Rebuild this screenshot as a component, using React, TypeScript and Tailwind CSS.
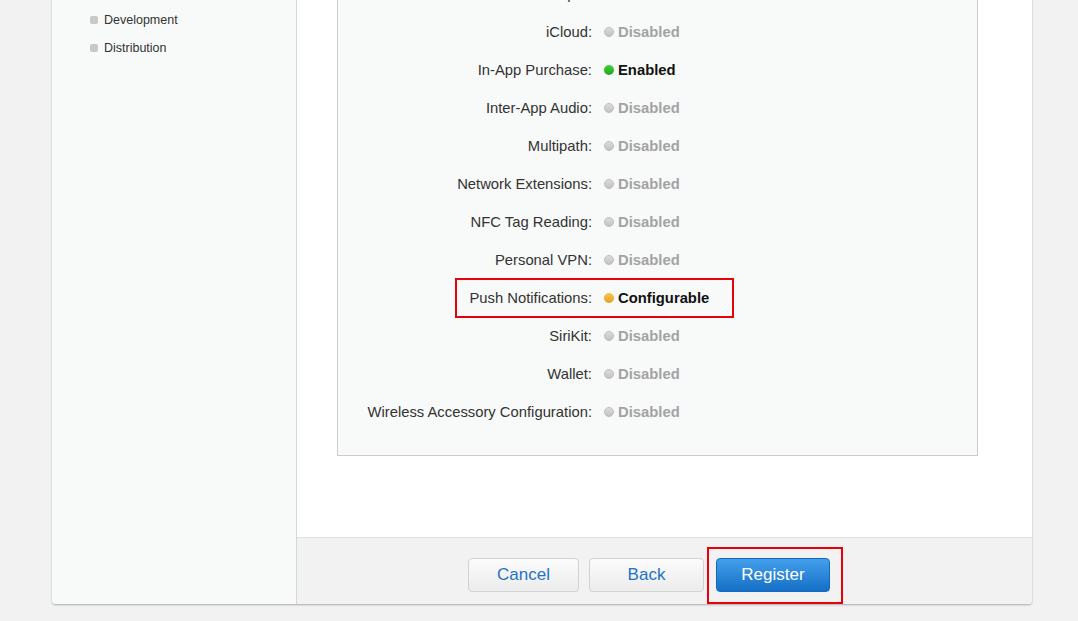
import React from "react";

type Status = "disabled" | "enabled" | "configurable";

type Capability = {
  label: string;
  status: Status;
  highlight?: boolean;
};

const CAPABILITIES: Capability[] = [
  { label: "Hotspot:", status: "disabled" },
  { label: "iCloud:", status: "disabled" },
  { label: "In-App Purchase:", status: "enabled" },
  { label: "Inter-App Audio:", status: "disabled" },
  { label: "Multipath:", status: "disabled" },
  { label: "Network Extensions:", status: "disabled" },
  { label: "NFC Tag Reading:", status: "disabled" },
  { label: "Personal VPN:", status: "disabled" },
  { label: "Push Notifications:", status: "configurable", highlight: true },
  { label: "SiriKit:", status: "disabled" },
  { label: "Wallet:", status: "disabled" },
  { label: "Wireless Accessory Configuration:", status: "disabled" },
];

const SIDEBAR_ITEMS = ["Development", "Distribution"];

function StatusDot({ status }: { status: Status }) {
  if (status === "enabled") {
    return <span className="inline-block h-[10px] w-[10px] rounded-full bg-gradient-to-b from-[#3fd43a] to-[#1fa51a]" />;
  }
  if (status === "configurable") {
    return <span className="inline-block h-[10px] w-[10px] rounded-full bg-gradient-to-b from-[#f7c64a] to-[#e2a021]" />;
  }
  return <span className="inline-block h-[10px] w-[10px] rounded-full border border-[#bdbdbd] bg-gradient-to-b from-[#dcdcdc] to-[#c2c2c2]" />;
}

function StatusText({ status }: { status: Status }) {
  if (status === "enabled") return <span className="font-bold text-[#111]">Enabled</span>;
  if (status === "configurable") return <span className="font-bold text-[#111]">Configurable</span>;
  return <span className="font-bold text-[#a3a3a3]">Disabled</span>;
}

function CapabilityRow({ cap }: { cap: Capability }) {
  return (
    <div className="relative flex h-[38px] items-center">
      {/* 红框高亮 */}
      {cap.highlight && (
        <div className="pointer-events-none absolute left-[117px] -top-[1px] h-[40px] w-[279px] border-2 border-[#e8000b]" />
      )}
      <div className="w-[266px] pr-[12px] text-right text-[#333]">{cap.label}</div>
      <div className="flex items-center gap-[4px]">
        <StatusDot status={cap.status} />
        <StatusText status={cap.status} />
      </div>
    </div>
  );
}

export default function App() {
  return (
    <div
      className="h-[621px] overflow-hidden bg-[#f2f2f2]"
      style={{ fontFamily: '"Liberation Sans", Arial, sans-serif' }}
    >
      <div className="mx-[52px] -mt-[40px] flex h-[644px] w-[980px] overflow-hidden rounded-b-[4px] bg-white shadow-[0_1px_2px_rgba(0,0,0,0.3)]">
        {/* 左侧栏 */}
        <aside className="w-[245px] shrink-0 border-r border-[#d6d6d6] bg-[#f8f9f9] pl-[38px] pt-[46px]">
          {SIDEBAR_ITEMS.map(item => (
            <div key={item} className="flex h-[28px] items-center gap-[6px] text-[12.5px] text-[#333]">
              <span className="inline-block h-[8px] w-[8px] rounded-[2px] bg-[#c8c8c8]" />
              {item}
            </div>
          ))}
        </aside>

        {/* 主区域 */}
        <main className="flex flex-1 flex-col">
          <div className="flex-1 pl-[40px] pr-[54px]">
            <div className="border-x border-b border-[#cccccc] bg-[#f8f9f9] pb-[24px] pt-[15px] text-[14.8px]">
              {CAPABILITIES.map(cap => (
                <CapabilityRow key={cap.label} cap={cap} />
              ))}
            </div>
          </div>

          {/* 底部按钮栏 */}
          <div className="flex h-[67px] items-center justify-center gap-[10px] border-t border-[#e0e0e0] bg-[#f2f2f2] pr-[31px] pt-[7px]">
            <button className="h-[34px] w-[111px] rounded-[4px] border border-[#d2d2d2] bg-gradient-to-b from-[#fbfbfb] to-[#ececec] text-[17px] text-[#1f72c6]">
              Cancel
            </button>
            <button className="h-[34px] w-[115px] rounded-[4px] border border-[#d2d2d2] bg-gradient-to-b from-[#fbfbfb] to-[#ececec] text-[17px] text-[#1f72c6]">
              Back
            </button>
            <div className="relative ml-[2px]">
              <button className="h-[34px] w-[114px] rounded-[4px] border border-[#1569bd] bg-gradient-to-b from-[#43a0ec] to-[#136fc6] text-[17px] text-white">
                Register
              </button>
              <div className="pointer-events-none absolute -left-[9px] -top-[11px] h-[57px] w-[136px] border-2 border-[#e8000b]" />
            </div>
          </div>
        </main>
      </div>
    </div>
  );
}
